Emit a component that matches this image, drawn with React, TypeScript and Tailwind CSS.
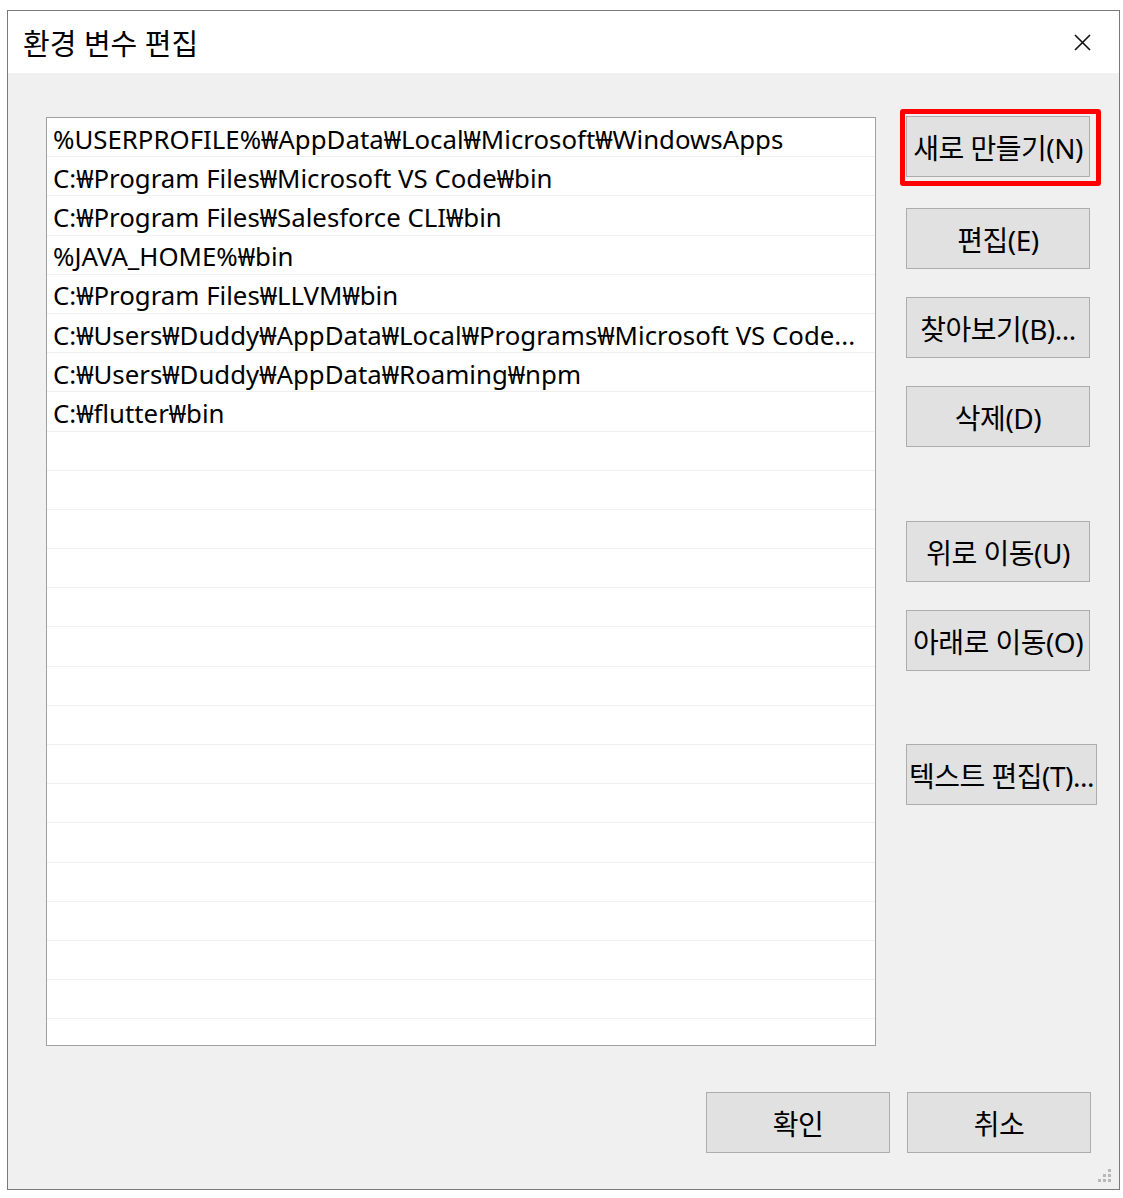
import React from 'react';

const paths = [
  '%USERPROFILE%₩AppData₩Local₩Microsoft₩WindowsApps',
  'C:₩Program Files₩Microsoft VS Code₩bin',
  'C:₩Program Files₩Salesforce CLI₩bin',
  '%JAVA_HOME%₩bin',
  'C:₩Program Files₩LLVM₩bin',
  'C:₩Users₩Duddy₩AppData₩Local₩Programs₩Microsoft VS Code...',
  'C:₩Users₩Duddy₩AppData₩Roaming₩npm',
  'C:₩flutter₩bin',
];

const rows = [...paths, ...Array(16).fill('')];

const Btn = ({ label, className = '' }: { label: string; className?: string }) => (
  <div
    className={`h-[61px] w-[184px] bg-[#e1e1e1] border border-[#adadad] flex items-center justify-center pt-[3px] whitespace-nowrap text-[28px] tracking-[-0.5px] text-black ${className}`}
  >
    {label}
  </div>
);

const App = () => {
  return (
    <div className="w-[1123px] h-[1198px] bg-white pt-[10px] pl-[7px] font-['Noto_Sans','Noto_Sans_CJK_KR',sans-serif]">
      <div className="w-[1113px] h-[1180px] border border-[#7a7a7a] flex flex-col">
        {/* Title bar */}
        <div className="h-[62px] bg-white flex items-center justify-between pl-[15px] pr-[28px]">
          <span className="text-[29px] text-black leading-none pt-[2px]">환경 변수 편집</span>
          <svg width="17" height="17" viewBox="0 0 17 17">
            <path d="M1 1 L16 16 M16 1 L1 16" stroke="#111" strokeWidth="1.6" />
          </svg>
        </div>

        {/* Body */}
        <div className="flex-1 bg-[#f0f0f0] relative flex flex-col pl-[38px] pt-[44px]">
          <div className="flex">
            <div className="w-[830px] h-[929px] border border-[#a0a0a0] bg-white overflow-hidden">
              {rows.map((p, i) => (
                <div
                  key={i}
                  className="h-[39.2px] border-b border-[#f0f0f0] pl-[6px] pt-[5px] flex items-center text-[25.8px] text-black whitespace-nowrap leading-none"
                >
                  {p}
                </div>
              ))}
            </div>

            <div className="ml-[30px] flex flex-col items-start">
              <div className="relative mt-[-1px]">
                <Btn label="새로 만들기(N)" />
                <div className="absolute left-[-6px] top-[-7px] right-[-11px] bottom-[-9px] border-[5px] border-[#ff0000] rounded-[3px]" />
              </div>
              <Btn label="편집(E)" className="mt-[31px]" />
              <Btn label="찾아보기(B)..." className="mt-[28px]" />
              <Btn label="삭제(D)" className="mt-[28px]" />
              <Btn label="위로 이동(U)" className="mt-[74px]" />
              <Btn label="아래로 이동(O)" className="mt-[28px]" />
              <Btn label="텍스트 편집(T)..." className="mt-[73px] w-[191px]" />
            </div>
          </div>

          {/* Footer buttons */}
          <div className="flex justify-end gap-[17px] pr-[28px] mt-[46px]">
            <Btn label="확인" />
            <Btn label="취소" />
          </div>

          {/* Size grip */}
          <svg className="absolute right-[6px] bottom-[5px]" width="16" height="16" viewBox="0 0 16 16">
            <rect x="11" y="1" width="3" height="3" fill="#b8b8b8" />
            <rect x="6" y="6" width="3" height="3" fill="#b8b8b8" />
            <rect x="11" y="6" width="3" height="3" fill="#b8b8b8" />
            <rect x="1" y="11" width="3" height="3" fill="#b8b8b8" />
            <rect x="6" y="11" width="3" height="3" fill="#b8b8b8" />
            <rect x="11" y="11" width="3" height="3" fill="#b8b8b8" />
          </svg>
        </div>
      </div>
    </div>
  );
};

export default App;
